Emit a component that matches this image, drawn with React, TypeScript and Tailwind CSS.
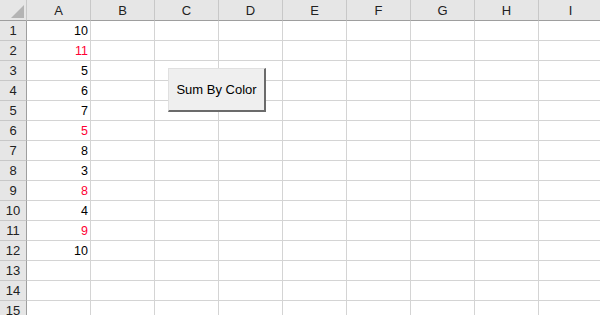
import React from "react";

const cols = ["A", "B", "C", "D", "E", "F", "G", "H", "I"];
const values: [number, boolean][] = [
  [10, false],
  [11, true],
  [5, false],
  [6, false],
  [7, false],
  [5, true],
  [8, false],
  [3, false],
  [8, true],
  [4, false],
  [9, true],
  [10, false],
];

const App: React.FC = () => {
  const rows = Array.from({ length: 15 }, (_, i) => i + 1);
  return (
    <div className="relative w-[600px] h-[315px] overflow-hidden bg-white font-['Liberation_Sans',Arial,sans-serif] text-[12px] text-black">
      <div className="grid grid-cols-[27px_repeat(9,64px)] grid-rows-[21px] auto-rows-[20px]">
        {/* corner */}
        <div className="relative bg-[#e6e6e6] border-r border-[#c8c8c8] border-b border-b-[#9e9e9e]">
          <svg className="absolute left-[11px] top-[5px]" width="13" height="13" viewBox="0 0 13 13">
            <polygon points="13,0 13,13 0,13" fill="#b4b4b4" />
          </svg>
        </div>
        {cols.map((c) => (
          <div
            key={c}
            className="flex items-center justify-center pt-[1px] bg-[#e6e6e6] border-r border-[#c8c8c8] border-b border-b-[#9e9e9e] text-[13px] text-[#222]"
          >
            {c}
          </div>
        ))}
        {rows.map((r) => (
          <React.Fragment key={r}>
            <div className="flex items-center justify-center pt-[1px] bg-[#e6e6e6] border-r border-r-[#9e9e9e] border-b border-[#c8c8c8] text-[13px] text-[#222]">
              {r}
            </div>
            {cols.map((c) => {
              const v = c === "A" ? values[r - 1] : undefined;
              return (
                <div
                  key={c}
                  className={
                    "flex items-center justify-end pr-[2px] pt-[1px] border-r border-b border-[#d4d4d4] text-[12.5px] " +
                    (v && v[1] ? "text-[#ff0033]" : "text-black")
                  }
                >
                  {v ? v[0] : ""}
                </div>
              );
            })}
          </React.Fragment>
        ))}
      </div>
      <button
        type="button"
        className="absolute left-[168px] top-[68px] w-[98px] h-[44px] bg-[#efefef] border border-[#e0e0e0] border-r-2 border-b-2 border-r-[#6b6b6b] border-b-[#6b6b6b] text-[13px] text-black font-['Liberation_Sans',Arial,sans-serif]"
      >
        Sum By Color
      </button>
    </div>
  );
};

export default App;
